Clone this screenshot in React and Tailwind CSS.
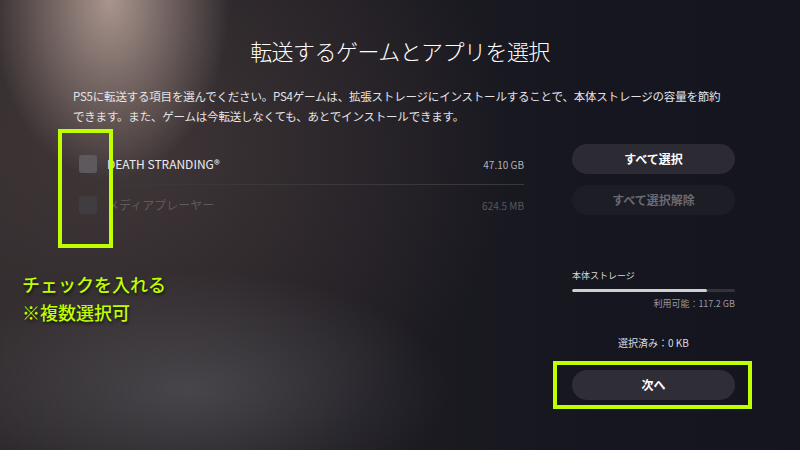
import React from 'react'

const items = [
  { name: 'DEATH STRANDING®', size: '47.10 GB', dim: false },
  { name: 'メディアプレーヤー', size: '624.5 MB', dim: true },
]

const App = () => {
  return (
    <div
      className="relative w-[800px] h-[450px] overflow-hidden text-white bg-[#14151e] bg-[radial-gradient(ellipse_120px_180px_at_110px_0px,rgba(200,175,165,0.8),transparent),radial-gradient(ellipse_260px_120px_at_190px_390px,rgba(95,95,102,0.55),transparent),radial-gradient(ellipse_380px_330px_at_130px_150px,rgba(85,70,70,0.55),transparent),linear-gradient(90deg,#2a2628_0%,#1e1c22_45%,#15161f_75%,#14151e_100%)]"
      style={{ fontFamily: '"Noto Sans CJK JP", "Noto Sans", sans-serif' }}
    >
      {/* Title */}
      <h1 className="pt-[36px] text-center text-[22px] leading-[28px] font-light tracking-tight">
        転送するゲームとアプリを選択
      </h1>

      {/* Description */}
      <p className="mt-[22px] pl-[73px] text-[11.5px] leading-[20px] text-[#e4e4e8] tracking-[-0.2px]">
        PS5に転送する項目を選んでください。PS4ゲームは、拡張ストレージにインストールすることで、本体ストレージの容量を節約
        <br />
        できます。また、ゲームは今転送しなくても、あとでインストールできます。
      </p>

      <div className="mt-[18px] flex pl-[73px]">
        {/* List */}
        <div className="w-[451px]">
          {items.map((it, i) => (
            <div key={i}>
              <div className="flex items-center h-[40px]">
                <div
                  className={`ml-[6px] w-[18px] h-[18px] rounded-[3px] ${it.dim ? 'bg-[#403c3f]' : 'bg-[#5d595c]'}`}
                />
                <span
                  className={`ml-[10px] text-[12px] ${it.dim ? 'text-[#5e5a5e]' : 'text-[#ececee]'}`}
                >
                  {it.name}
                </span>
                <span
                  className={`ml-auto text-[10px] ${it.dim ? 'text-[#5a575c]' : 'text-[#b4b2b6]'}`}
                >
                  {it.size}
                </span>
              </div>
              {i === 0 && <div className="ml-[34px] h-px bg-[#3a383d]" />}
            </div>
          ))}
        </div>

        {/* Right panel */}
        <div className="ml-[48px] w-[163px] flex flex-col">
          <button className="h-[30px] rounded-full bg-[#2c2b33] text-[12px] font-bold text-white">
            すべて選択
          </button>
          <button className="mt-[11px] h-[30px] rounded-full bg-[#1d1d25] text-[12px] font-bold text-[#6a6a72]">
            すべて選択解除
          </button>

          <div className="mt-[54px] text-[9px] leading-[14px] text-[#d8d8dc]">本体ストレージ</div>
          <div className="mt-[6px] flex h-[3px] rounded-full bg-[#33333b] overflow-hidden">
            <div className="w-[83%] bg-[#cfcfd2] rounded-full" />
          </div>
          <div className="mt-[5px] text-right text-[9px] leading-[14px] text-[#9a9aa0]">
            利用可能：117.2 GB
          </div>

          <div className="mt-[25px] text-center text-[10px] leading-[14px] text-[#dcdce0]">
            選択済み：0 KB
          </div>

          <button className="mt-[20px] h-[30px] rounded-full bg-[#2f2e36] text-[12px] font-bold text-white">
            次へ
          </button>
        </div>
      </div>

      {/* Annotations */}
      <div className="absolute left-[58px] top-[129px] w-[55px] h-[119px] border-[4px] border-[#bfff00]" />
      <div className="absolute left-[553px] top-[361px] w-[199px] h-[48px] border-[4px] border-[#bfff00]" />
      <div className="absolute left-[22px] top-[270px] text-[18px] leading-[28px] font-medium text-[#bfff00] [text-shadow:1px_2px_3px_rgba(0,0,0,0.6)]">
        <div>チェックを入れる</div>
        <div>※複数選択可</div>
      </div>
    </div>
  )
}

export default App
